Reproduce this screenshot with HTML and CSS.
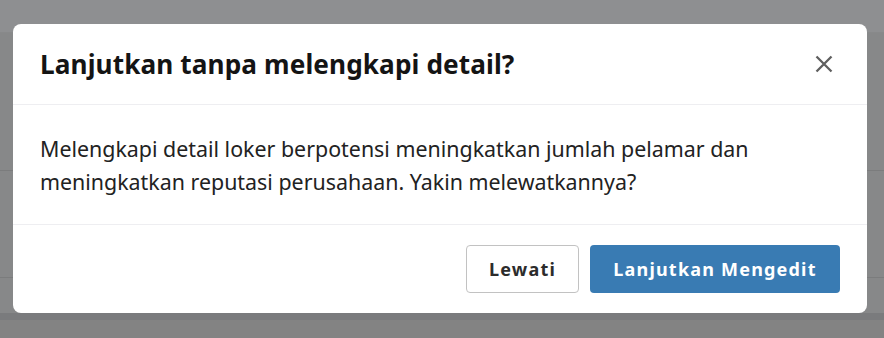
FILE: index.html
```html
<!DOCTYPE html>
<html lang="id">
<head>
<meta charset="utf-8">
<title>Modal</title>
<link rel="stylesheet" href="styles.css">
</head>
<body>
<div class="page">
  <div class="page-top"></div>
  <div class="page-main">
    <div class="page-row"></div>
    <div class="page-row"></div>
  </div>
  <div class="page-foot"></div>
</div>
<div class="overlay">
  <div class="modal" role="dialog">
    <div class="modal-header">
      <h2 class="modal-title">Lanjutkan tanpa melengkapi detail?</h2>
      <button class="close-btn" aria-label="Tutup">
        <svg width="20" height="20" viewBox="0 0 20 20"><path d="M2.5 2.5 L17.5 17.5 M17.5 2.5 L2.5 17.5" stroke="#5f5f5f" stroke-width="2.3" fill="none"/></svg>
      </button>
    </div>
    <div class="modal-body">
      <p class="modal-text">Melengkapi detail loker berpotensi meningkatkan jumlah pelamar dan meningkatkan reputasi perusahaan. Yakin melewatkannya?</p>
    </div>
    <div class="modal-footer">
      <button class="btn btn-outline">Lewati</button>
      <button class="btn btn-primary">Lanjutkan Mengedit</button>
    </div>
  </div>
</div>
</body>
</html>
```

FILE: styles.css
```css
* { box-sizing: border-box; }
html, body { margin: 0; padding: 0; }
body {
  width: 884px;
  height: 338px;
  overflow: hidden;
  font-family: "Noto Sans", "Open Sans", sans-serif;
  background: #858687;
  position: relative;
}
.page { display: flex; flex-direction: column; height: 338px; }
.page-top { height: 33px; background: #8e8f91; border-bottom: 1px solid #88898a; }
.page-main { flex: 1; background: #878889; display: flex; flex-direction: column; padding-top: 137px; }
.page-row { height: 107px; border-top: 1px solid #7b7c7d; }
.page-row:last-child { height: 35px; }
.page-foot { height: 25px; background: linear-gradient(#7a7b7d 0 7px, #838383 7px); }

.overlay {
  position: absolute;
  inset: 0;
  padding: 24px 17px 0 13px;
}
.modal {
  width: 854px;
  height: 289px;
  background: #fff;
  border-radius: 8px;
  display: flex;
  flex-direction: column;
}
.modal-header {
  height: 81px;
  display: flex;
  align-items: center;
  justify-content: space-between;
  padding: 0 33px 0 27px;
  border-bottom: 1px solid #eeeef1;
}
.modal-title {
  margin: 0;
  font-size: 26.2px;
  font-weight: 700;
  color: #141414;
  letter-spacing: 0.1px;
}
.close-btn {
  border: 0;
  background: none;
  padding: 0;
  width: 20px;
  height: 20px;
  display: flex;
}
.modal-body {
  height: 120px;
  padding: 27px 27px 0 27px;
  border-bottom: 1px solid #eeeef1;
}
.modal-text {
  margin: 0;
  font-size: 21.4px;
  line-height: 33px;
  color: #222;
  max-width: 770px;
}
.modal-footer {
  flex: 1;
  display: flex;
  justify-content: flex-end;
  align-items: flex-start;
  gap: 11px;
  padding: 20px 27px 0 27px;
}
.btn {
  height: 48px;
  border-radius: 4px;
  font-family: "Noto Sans", "Open Sans", sans-serif;
  font-size: 18px;
  font-weight: 700;
  letter-spacing: 1.2px;
  padding: 0;
}
.btn-outline {
  width: 113px;
  background: #fff;
  border: 1px solid #c2c2c2;
  color: #2c2c2c;
}
.btn-primary {
  width: 250px;
  background: #397bb3;
  border: 0;
  color: #fff;
}
```
